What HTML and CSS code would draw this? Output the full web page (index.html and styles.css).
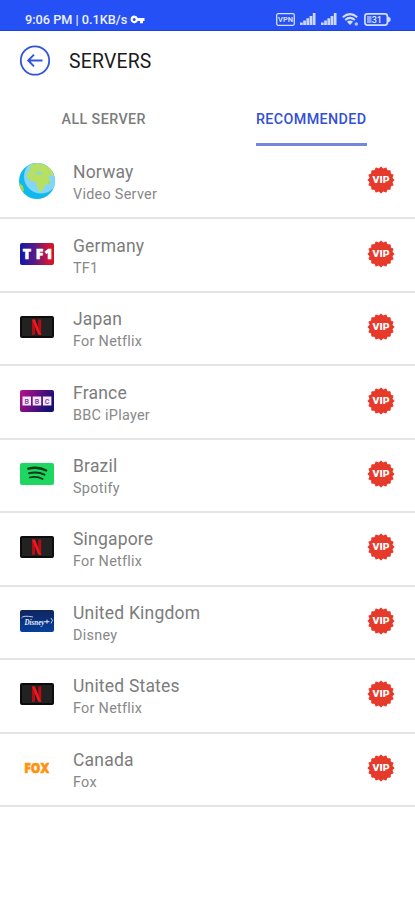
FILE: index.html
```html
<!DOCTYPE html>
<html lang="en">
<head>
<meta charset="utf-8">
<title>Servers</title>
<link rel="stylesheet" href="styles.css">
</head>
<body>
<svg class="defs" aria-hidden="true">
  <symbol id="burst" viewBox="-14 -14 28 28">
    <g fill="#e63a2b" stroke="#e63a2b" stroke-width="1" stroke-linejoin="round">
      <rect x="-9.200" y="-9.200" width="18.400" height="18.400"/>
      <rect x="-9.200" y="-9.200" width="18.400" height="18.400" transform="rotate(22.5)"/>
      <rect x="-9.200" y="-9.200" width="18.400" height="18.400" transform="rotate(45)"/>
      <rect x="-9.200" y="-9.200" width="18.400" height="18.400" transform="rotate(67.5)"/>
    </g>
  </symbol>
  <symbol id="netflix" viewBox="0 0 34 22">
    <rect width="34" height="22" rx="2" fill="#0c0c0c"/>
    <rect x="2" y="2" width="30" height="18" fill="#222"/>
    <path d="M12 3.500h3v15l-3 .4zM18.200 3.500h3v15.400l-3-.4z" fill="#b60c16"/>
    <path d="M12 3.500h3l6.200 15.400-3-.4z" fill="#ed1822"/>
  </symbol>
  <symbol id="signal" viewBox="0 0 16 12">
    <path d="M0 9.500h2.700V12H0zM3.200 7.500h2.700V12H3.200zM6.400 5.300h2.700V12H6.400zM9.600 3h2.700v9H9.600zM12.800 0h2.700v12h-2.700z" fill="#cdd7ff"/>
  </symbol>
</svg>

<div class="status">
  <span class="clock">9:06 PM | 0.1KB/s</span>
  <svg class="key" width="15" height="9" viewBox="0 0 15 9"><path fill="#fff" fill-rule="evenodd" d="M4.200.5a3.800 3.800 0 0 1 3.600 2.500H14.500v3H13v2.300h-3V6H7.800A3.800 3.800 0 1 1 4.200.5zm0 2.400a1.500 1.500 0 1 0 0 3 1.500 1.500 0 0 0 0-3z"/></svg>
  <div class="indicators">
    <svg width="19" height="13" viewBox="0 0 19 13"><rect x=".7" y=".7" width="17.600" height="11.600" rx="1.500" fill="none" stroke="#d5ddff" stroke-width="1.300"/><text x="9.500" y="9.300" text-anchor="middle" textLength="15" lengthAdjust="spacingAndGlyphs" class="vpn">VPN</text></svg>
    <svg width="16" height="12"><use href="#signal"/></svg>
    <svg width="16" height="12"><use href="#signal"/></svg>
    <svg width="17" height="13" viewBox="0 0 17 13"><g fill="none" stroke="#d5ddff" stroke-width="2"><path d="M.8 4.300Q8 -2 15.200 4.300"/><path d="M3.200 7Q8 2.700 12.800 7"/></g><path d="M8 12 4.900 8.700Q8 6.100 11.100 8.700z" fill="#d5ddff"/><circle cx="14.300" cy="11" r="1.800" fill="#b4c2ff"/></svg>
    <svg width="27" height="13" viewBox="0 0 27 13"><rect x=".9" y=".9" width="22.500" height="11.200" rx="2.500" fill="none" stroke="#d5ddff" stroke-width="1.700"/><rect x="3" y="3" width="4.500" height="7" fill="#8fa5ff"/><path d="M24 3.500 26.500 5v3L24 9.500z" fill="#d5ddff"/><text x="12.800" y="9.800" text-anchor="middle" class="charge">31</text></svg>
  </div>
</div>

<header class="header">
  <svg width="32" height="32" viewBox="0 0 32 32" fill="none" stroke="#3054dc"><circle cx="16" cy="15.500" r="14.200" stroke-width="1.800"/><path d="M23.500 15.500H9.500M15 9.700 9.200 15.500l5.800 5.800" stroke-width="1.900"/></svg>
  <h1>SERVERS</h1>
</header>

<nav class="tabs">
  <div class="tab"><span>ALL SERVER</span></div>
  <div class="tab active"><span>RECOMMENDED</span></div>
</nav>

<main class="list">
  <div class="row">
    <svg class="logo globe" width="36" height="36" viewBox="0 0 36 36">
      <defs><clipPath id="disc"><circle cx="18" cy="18" r="18"/></clipPath></defs>
      <g clip-path="url(#disc)"><rect width="36" height="36" fill="#10b9ec"/><circle cx="22" cy="13.500" r="17" fill="#83d6f8"/>
      <path d="M10 3 18 0l9 2 7 6 1 5-4-1-2 3 3 2-3 4-3 1-2 5-3 2-3-5-1-5-5-1-4-4 1-5 3-3z" fill="#b7df62"/>
      <path d="M17 9 20 8l4 2-2 2-4-1-3 1z" fill="#93d9c0"/><path d="M0 20 4 23l1 5-2 1-3-5zM29 19l2-1-1 4z" fill="#a5d84e"/></g>
    </svg>
    <div class="info"><div class="name">Norway</div><div class="sub">Video Server</div></div>
    <svg class="vip" width="28" height="28"><use href="#burst"/><text x="14" y="17.300" textLength="17" lengthAdjust="spacingAndGlyphs">VIP</text></svg>
  </div>
  <div class="row">
    <svg class="logo" width="34" height="22" viewBox="0 0 34 22">
      <defs><linearGradient id="tf"><stop offset="0" stop-color="#1516a8"/><stop offset=".45" stop-color="#5a1a87"/><stop offset=".85" stop-color="#d4152f"/><stop offset="1" stop-color="#c91530"/></linearGradient></defs>
      <rect width="34" height="22" rx="2" fill="url(#tf)"/><g class="tf"><text x="7" y="16">T</text><text x="19.500" y="16">F</text><text x="28.500" y="16">1</text></g>
    </svg>
    <div class="info"><div class="name">Germany</div><div class="sub">TF1</div></div>
    <svg class="vip" width="28" height="28"><use href="#burst"/><text x="14" y="17.300" textLength="17" lengthAdjust="spacingAndGlyphs">VIP</text></svg>
  </div>
  <div class="row">
    <svg class="logo" width="34" height="22"><use href="#netflix"/></svg>
    <div class="info"><div class="name">Japan</div><div class="sub">For Netflix</div></div>
    <svg class="vip" width="28" height="28"><use href="#burst"/><text x="14" y="17.300" textLength="17" lengthAdjust="spacingAndGlyphs">VIP</text></svg>
  </div>
  <div class="row">
    <svg class="logo" width="34" height="22" viewBox="0 0 34 22">
      <defs><linearGradient id="bb" y2=".35"><stop offset="0" stop-color="#b71386"/><stop offset=".5" stop-color="#6d0d83"/><stop offset="1" stop-color="#170f73"/></linearGradient></defs>
      <rect width="34" height="22" rx="2" fill="url(#bb)"/><path d="M2.500 6.500h8.500v9H2.500zM12.700 6.500h8.500v9h-8.500zM22.900 6.500h8.500v9h-8.500z" fill="#f5e8fa"/>
      <g class="bbc"><text x="6.750" y="13.700">B</text><text x="16.950" y="13.700">B</text><text x="27.150" y="13.700">C</text></g>
    </svg>
    <div class="info"><div class="name">France</div><div class="sub">BBC iPlayer</div></div>
    <svg class="vip" width="28" height="28"><use href="#burst"/><text x="14" y="17.300" textLength="17" lengthAdjust="spacingAndGlyphs">VIP</text></svg>
  </div>
  <div class="row">
    <svg class="logo" width="34" height="22" viewBox="0 0 34 22">
      <rect width="34" height="22" rx="2" fill="#1ed760"/><g fill="none" stroke="#06381a" stroke-linecap="round"><path d="M8.300 5.700Q18 3.200 26.200 7.400" stroke-width="2.300"/><path d="M9 10.200Q17.500 8 24.500 11.700" stroke-width="2"/><path d="M9.700 14.500Q17 12.800 22.700 16" stroke-width="1.700"/></g>
    </svg>
    <div class="info"><div class="name">Brazil</div><div class="sub">Spotify</div></div>
    <svg class="vip" width="28" height="28"><use href="#burst"/><text x="14" y="17.300" textLength="17" lengthAdjust="spacingAndGlyphs">VIP</text></svg>
  </div>
  <div class="row">
    <svg class="logo" width="34" height="22"><use href="#netflix"/></svg>
    <div class="info"><div class="name">Singapore</div><div class="sub">For Netflix</div></div>
    <svg class="vip" width="28" height="28"><use href="#burst"/><text x="14" y="17.300" textLength="17" lengthAdjust="spacingAndGlyphs">VIP</text></svg>
  </div>
  <div class="row">
    <svg class="logo" width="34" height="22" viewBox="0 0 34 22">
      <defs><linearGradient id="dn" x2="0" y2="1"><stop offset="0" stop-color="#11245c"/><stop offset="1" stop-color="#06409d"/></linearGradient></defs>
      <rect width="34" height="22" rx="2" fill="url(#dn)"/><path d="M1.500 8Q3 5 13 7M31 8Q34 10 31 13.500" fill="none" stroke="#b9cbee"/><text x="4.500" y="14.500" textLength="20" lengthAdjust="spacingAndGlyphs" class="disney">Disney</text><path d="M24.500 11.700h5M27 9.700v4" stroke="#dce7ff" stroke-width="1"/>
    </svg>
    <div class="info"><div class="name">United Kingdom</div><div class="sub">Disney</div></div>
    <svg class="vip" width="28" height="28"><use href="#burst"/><text x="14" y="17.300" textLength="17" lengthAdjust="spacingAndGlyphs">VIP</text></svg>
  </div>
  <div class="row">
    <svg class="logo" width="34" height="22"><use href="#netflix"/></svg>
    <div class="info"><div class="name">United States</div><div class="sub">For Netflix</div></div>
    <svg class="vip" width="28" height="28"><use href="#burst"/><text x="14" y="17.300" textLength="17" lengthAdjust="spacingAndGlyphs">VIP</text></svg>
  </div>
  <div class="row">
    <svg class="logo" width="34" height="22" viewBox="0 0 34 22">
      <rect x=".5" y=".5" width="33" height="21" rx="2" fill="#fff" stroke="#fafafa"/><text x="16.800" y="16" text-anchor="middle" textLength="25" lengthAdjust="spacingAndGlyphs" class="fox">FOX</text>
    </svg>
    <div class="info"><div class="name">Canada</div><div class="sub">Fox</div></div>
    <svg class="vip" width="28" height="28"><use href="#burst"/><text x="14" y="17.300" textLength="17" lengthAdjust="spacingAndGlyphs">VIP</text></svg>
  </div>
</main>
</body>
</html>
```
FILE: styles.css
```css
* { box-sizing: border-box; }
body {
  margin: 0;
  height: 900px;
  overflow: hidden;
  background: #fff;
  font-family: Roboto, "Liberation Sans", sans-serif;
  color: #7c7c7c;
}
svg { display: block; flex: none; }
.defs { width: 0; height: 0; position: absolute; }

.status {
  height: 31px;
  padding: 8px 24px 0 25px;
  display: flex;
  align-items: center;
  background: #2450f5;
  border-bottom: 1px solid #1c43dd;
}
.clock {
  color: #eef1ff;
  font-size: 12.7px;
  font-weight: 500;
  white-space: nowrap;
}
.key { margin-left: 3px; }
.indicators {
  margin-left: auto;
  display: flex;
  align-items: center;
  gap: 5px;
}
.vpn { font-size: 7px; font-weight: 700; fill: #d5ddff; }
.charge { font-size: 9px; font-weight: 500; fill: #e2e8ff; }

.header {
  height: 60px;
  padding-left: 19px;
  display: flex;
  align-items: center;
  gap: 18px;
}
h1 {
  margin: 0;
  font-size: 19.4px;
  font-weight: 400;
  letter-spacing: 0.2px;
  color: #1b1b1b;
}

.tabs { height: 55px; display: flex; }
.tab {
  flex: 1;
  display: flex;
  justify-content: center;
  font-size: 14.3px;
  font-weight: 500;
  letter-spacing: 0.4px;
  color: #7c7c7c;
}
.tab span { height: 55px; line-height: 57px; }
.tab.active { color: #3450d4; }
.tab.active span { border-bottom: 3px solid #7388dc; }

.row {
  height: 73.45px;
  padding: 0 20px 3px 19px;
  display: grid;
  grid-template-columns: 36px 1fr 28px;
  column-gap: 18px;
  align-items: center;
  border-bottom: 2px solid #e4e4e4;
}
.logo { margin: 0 auto; }
.globe { margin-top: 2px; }
.info { padding-top: 7px; }
.name { font-size: 17.5px; line-height: 22px; letter-spacing: 0.2px; }
.sub { font-size: 14.4px; line-height: 23px; letter-spacing: 0.28px; color: #888; }
.vip text {
  font-size: 8.5px;
  font-weight: 900;
  text-anchor: middle;
  fill: #fff;
}
.tf { font: 800 14px "Open Sans", sans-serif; fill: #fff; stroke: #fff; stroke-width: 0.6px; text-anchor: middle; }
.bbc text { font-size: 7px; font-weight: 700; text-anchor: middle; fill: #8d489f; }
.disney { font: italic 700 9px "Liberation Serif", serif; fill: #e8efff; }
.fox { font: 800 13.5px "Open Sans", sans-serif; fill: #ff930f; stroke: #ff930f; stroke-width: 0.6px; }
```
